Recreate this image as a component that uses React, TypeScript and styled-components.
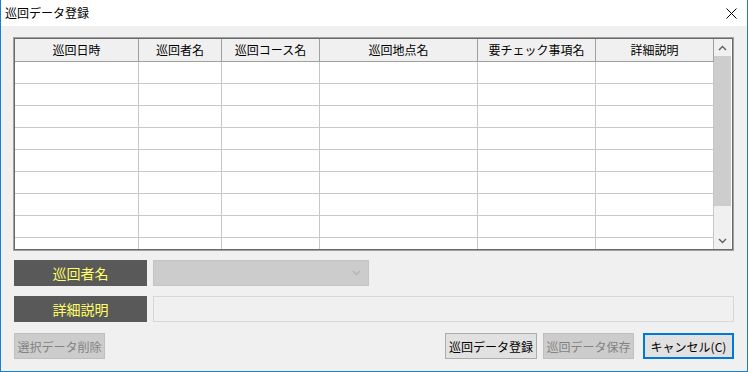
import React from "react";
import styled, { createGlobalStyle } from "styled-components";

const GlobalStyle = createGlobalStyle`
  html, body {
    margin: 0;
    padding: 0;
    background: #ffffff;
  }
  body {
    font-family: "Noto Sans CJK JP", "Liberation Sans", sans-serif;
    font-size: 12px;
    color: #000;
  }
`;

const columns = [
  { title: "巡回日時", width: 124 },
  { title: "巡回者名", width: 83 },
  { title: "巡回コース名", width: 98 },
  { title: "巡回地点名", width: 158 },
  { title: "要チェック事項名", width: 118 },
  { title: "詳細説明", width: 118 },
];

const rowCount = 9;

function Chevron({ up, color }: { up?: boolean; color: string }) {
  return (
    <svg width="9" height="6" viewBox="0 0 9 6">
      <path
        d={up ? "M1 5 L4.5 1.5 L8 5" : "M1 1 L4.5 4.5 L8 1"}
        fill="none"
        stroke={color}
        strokeWidth="1.4"
      />
    </svg>
  );
}

function App() {
  const template = columns.map((c) => `${c.width}px`).join(" ");
  return (
    <>
      <GlobalStyle />
      <Window>
        <TitleBar>
          <Title>巡回データ登録</Title>
          <CloseButton>
            <svg width="11" height="11" viewBox="0 0 11 11">
              <path d="M0.5 0.5 L10.5 10.5 M10.5 0.5 L0.5 10.5" stroke="#000" strokeWidth="1" />
            </svg>
          </CloseButton>
        </TitleBar>
        <Body>
          <Grid>
            <GridMain>
              <HeaderRow style={{ gridTemplateColumns: template }}>
                {columns.map((c) => (
                  <HeaderCell key={c.title}>{c.title}</HeaderCell>
                ))}
              </HeaderRow>
              {Array.from({ length: rowCount }).map((_, i) => (
                <DataRow key={i} style={{ gridTemplateColumns: template }}>
                  {columns.map((c) => (
                    <DataCell key={c.title} />
                  ))}
                </DataRow>
              ))}
            </GridMain>
            <ScrollBar>
              <ScrollArrow>
                <Chevron up color="#606060" />
              </ScrollArrow>
              <Thumb />
              <Track />
              <ScrollArrow>
                <Chevron color="#606060" />
              </ScrollArrow>
            </ScrollBar>
          </Grid>

          <FieldRow>
            <FieldLabel>巡回者名</FieldLabel>
            <ComboBox>
              <Chevron color="#b4b4b4" />
            </ComboBox>
          </FieldRow>
          <FieldRow>
            <FieldLabel>詳細説明</FieldLabel>
            <TextBox />
          </FieldRow>

          <ButtonBar>
            <Button disabled $width={91}>選択データ削除</Button>
            <Spacer />
            <Button $width={92}>巡回データ登録</Button>
            <Button disabled $width={91}>巡回データ保存</Button>
            <Button $primary $width={91}>キャンセル(C)</Button>
          </ButtonBar>
        </Body>
      </Window>
    </>
  );
}

export default App;

const Window = styled.div`
  width: 748px;
  height: 372px;
  box-sizing: border-box;
  border: 1px solid #1a7fd1;
  border-top: none;
  display: flex;
  flex-direction: column;
  background: #f0f0f0;
`;

const TitleBar = styled.div`
  height: 26px;
  flex-shrink: 0;
  background: #ffffff;
  display: flex;
  align-items: center;
  justify-content: space-between;
  padding: 0 10px 0 4px;
`;

const Title = styled.span`
  font-size: 12px;
  margin-top: -1px;
`;

const CloseButton = styled.span`
  display: flex;
  align-items: center;
  margin-top: 1px;
`;

const Body = styled.div`
  flex: 1;
  padding: 11px 13px 12px 12px;
  display: flex;
  flex-direction: column;
`;

const Grid = styled.div`
  height: 214px;
  box-sizing: border-box;
  border: 1px solid #a0a0a0;
  box-shadow: inset 1px 1px 0 #696969, inset -1px -1px 0 #696969;
  padding: 1px;
  display: flex;
  background: #ffffff;
  overflow: hidden;
`;

const GridMain = styled.div`
  width: 699px;
  overflow: hidden;
`;

const HeaderRow = styled.div`
  display: grid;
  height: 23px;
  box-sizing: border-box;
  background: #f0f0f0;
  border-bottom: 1px solid #a0a0a0;
`;

const HeaderCell = styled.div`
  border-right: 1px solid #a0a0a0;
  display: flex;
  align-items: center;
  justify-content: center;
  font-size: 12px;
  line-height: 1;
`;

const DataRow = styled.div`
  display: grid;
  height: 22px;
  box-sizing: border-box;
  border-bottom: 1px solid #c8c8c8;
  background: #ffffff;
`;

const DataCell = styled.div`
  border-right: 1px solid #c8c8c8;
`;

const ScrollBar = styled.div`
  width: 17px;
  display: flex;
  flex-direction: column;
  background: #f0f0f0;
`;

const ScrollArrow = styled.div`
  height: 17px;
  display: flex;
  align-items: center;
  justify-content: center;
`;

const Thumb = styled.div`
  height: 150px;
  background: #cdcdcd;
`;

const Track = styled.div`
  flex: 1;
`;

const FieldRow = styled.div`
  display: flex;
  gap: 6px;
  margin-top: 9px;
  height: 26px;
  & + & {
    margin-top: 10px;
  }
`;

const FieldLabel = styled.div`
  width: 133px;
  margin-left: 1px;
  background: #595959;
  color: #ffff66;
  font-size: 14px;
  display: flex;
  align-items: center;
  justify-content: center;
`;

const ComboBox = styled.div`
  width: 216px;
  box-sizing: border-box;
  background: #cccccc;
  border: 1px solid #c4c4c4;
  display: flex;
  align-items: center;
  justify-content: flex-end;
  padding-right: 7px;
`;

const TextBox = styled.div`
  flex: 1;
  box-sizing: border-box;
  background: #f0f0f0;
  border: 1px solid #d7d7d7;
`;

const ButtonBar = styled.div`
  display: flex;
  gap: 6px;
  margin-top: 11px;
  padding-left: 1px;
  height: 26px;
`;

const Spacer = styled.div`
  flex: 1;
`;

const Button = styled.button<{ $primary?: boolean; $width: number }>`
  width: ${({ $width }) => $width}px;
  height: 26px;
  box-sizing: border-box;
  font-family: "Noto Sans CJK JP", "Liberation Sans", sans-serif;
  font-size: 12px;
  padding: 0;
  color: #000;
  background: #e1e1e1;
  border: ${({ $primary }) => ($primary ? "2px solid #0078d7" : "1px solid #adadad")};
  margin-left: ${({ $primary }) => ($primary ? "3px" : "0")};
  &:disabled {
    background: #cccccc;
    border-color: #bfbfbf;
    color: #838383;
  }
`;
